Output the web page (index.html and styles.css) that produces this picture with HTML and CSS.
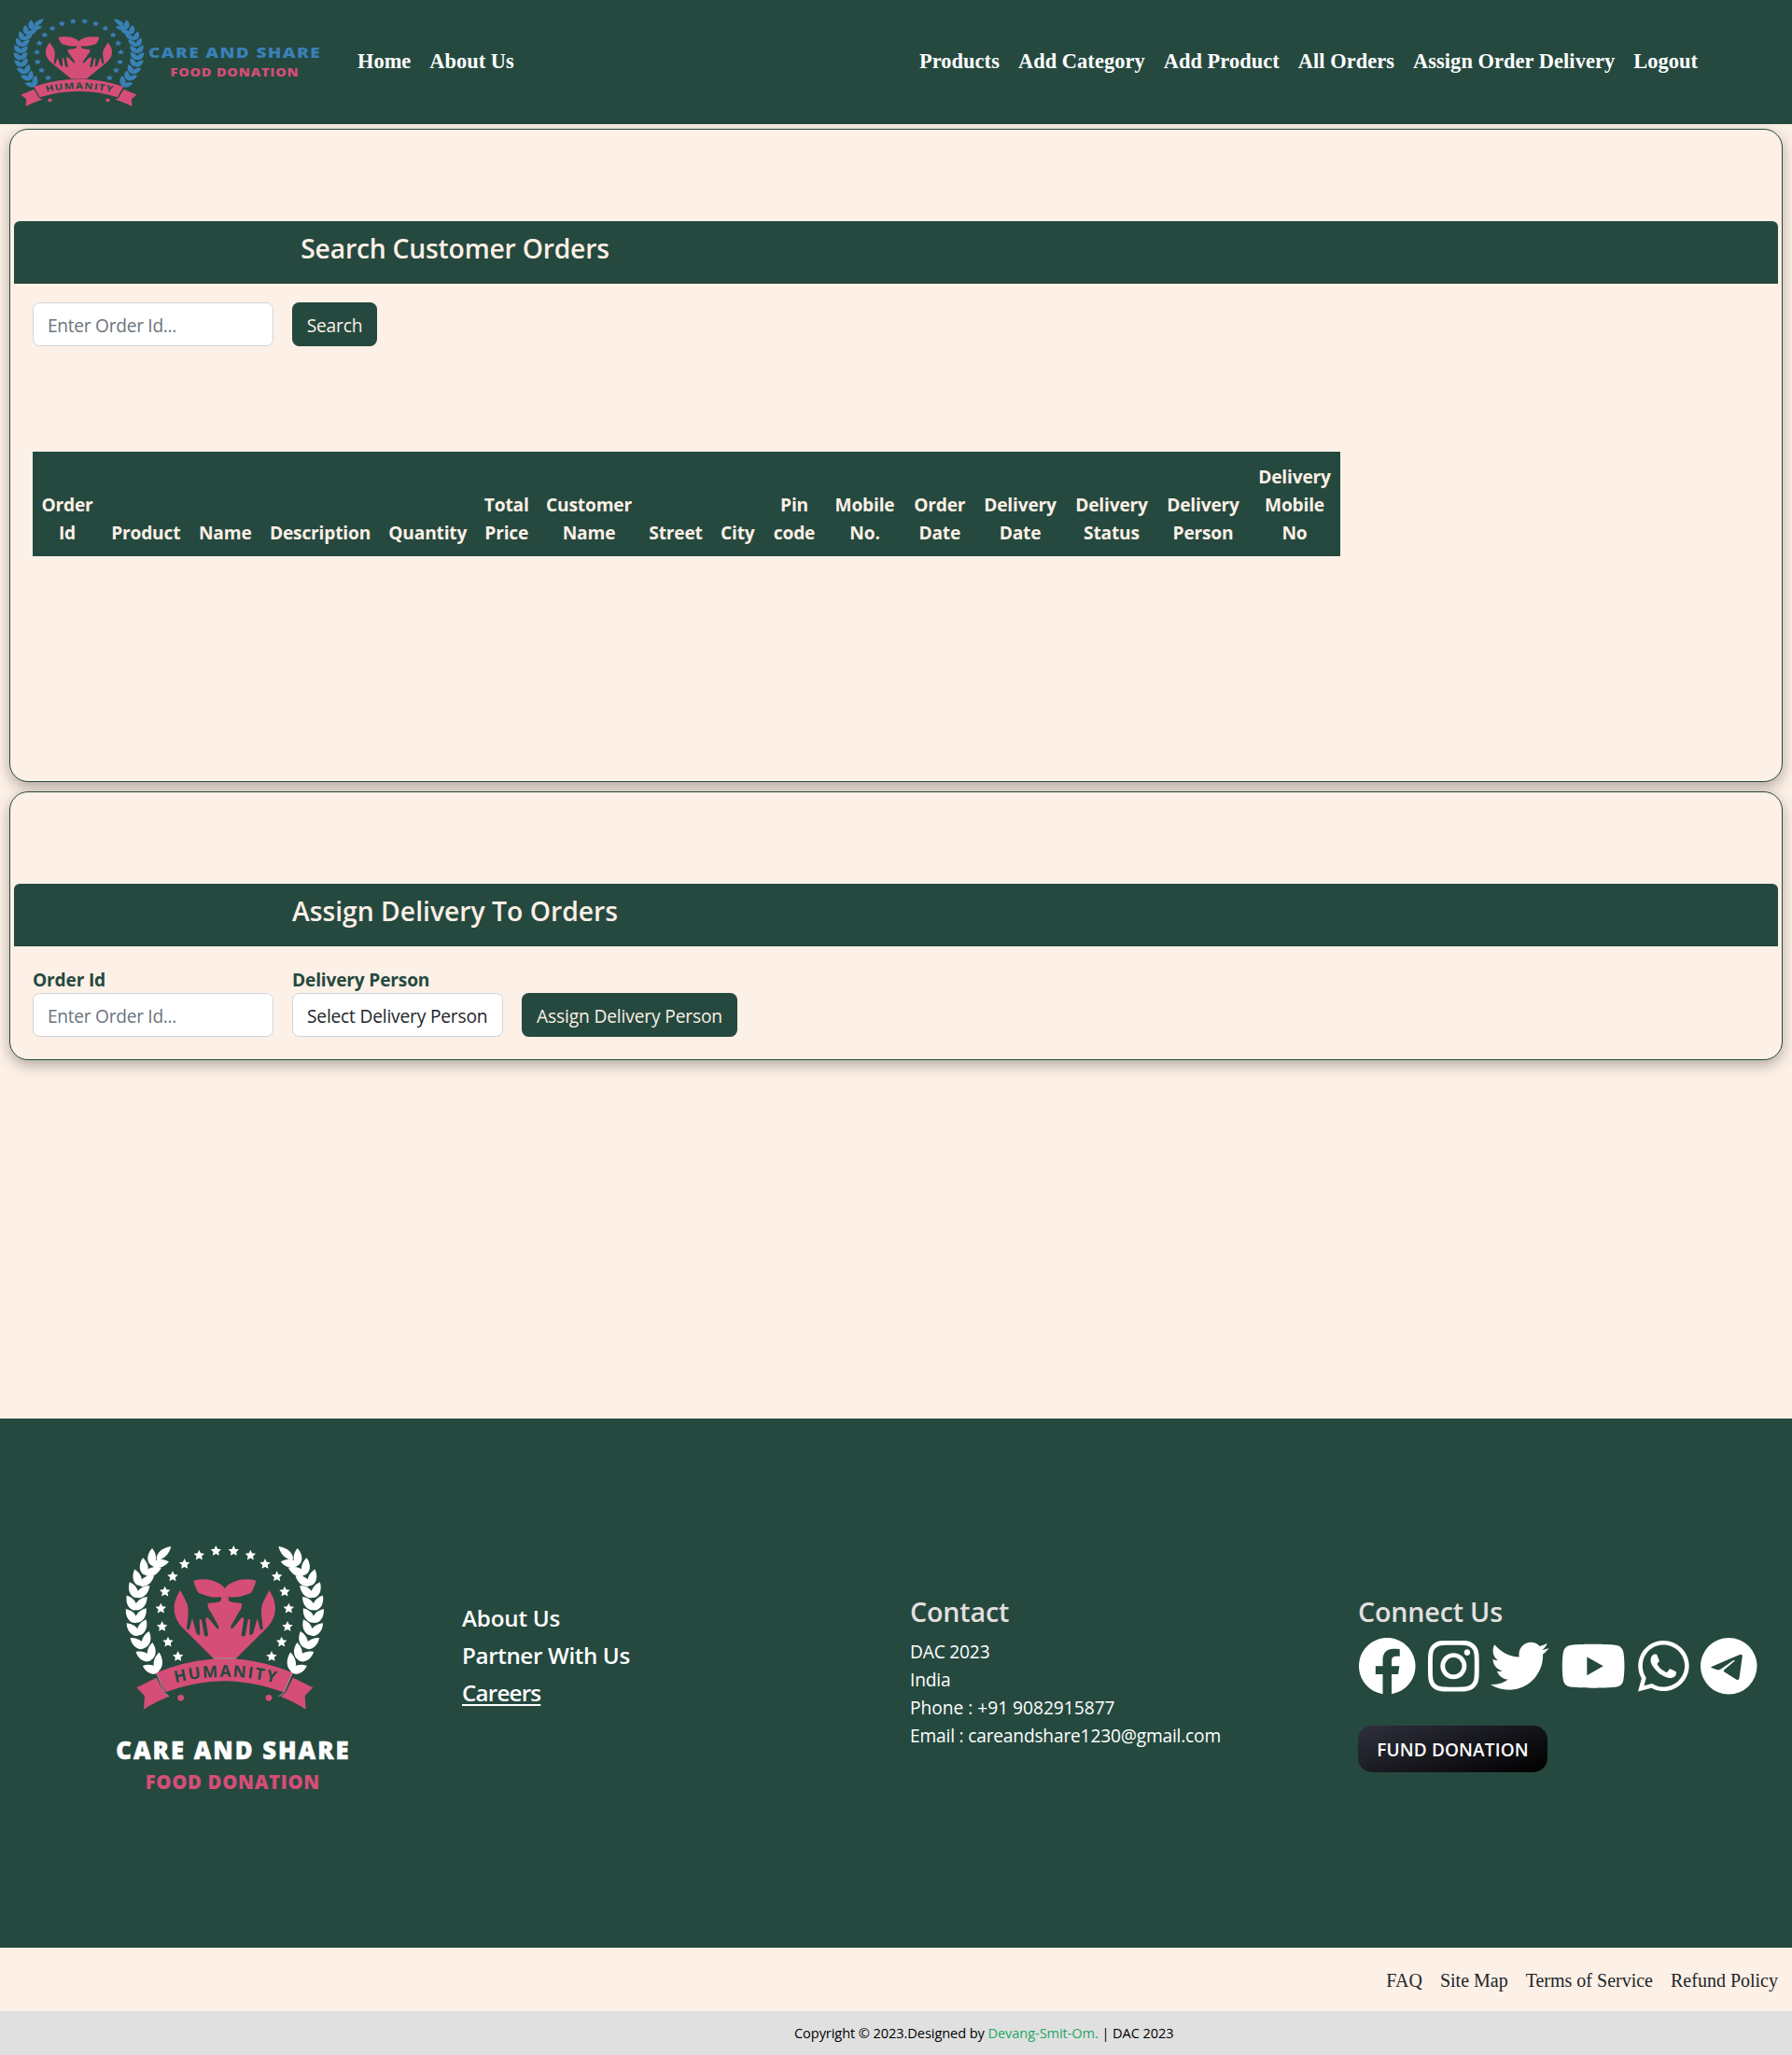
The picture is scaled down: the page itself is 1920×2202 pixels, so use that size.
FILE: index.html
```html
<!DOCTYPE html>
<html lang="en">
<head>
<meta charset="utf-8">
<title>Care and Share</title>
<link rel="stylesheet" href="styles.css">
</head>
<body>
<svg class="defs" width="0" height="0" aria-hidden="true">
  <defs>
    <path id="leaf" d="M0 0C6 -17 34 -21 56 0C36 17 10 16 0 0Z"/>
    <path id="star" d="M0-18L5.2-7L17.2-5.6L8.3 2.7L10.6 14.6L0 8.8L-10.6 14.6L-8.3 2.7L-17.2-5.6L-5.2-7Z"/>
    <g id="branch">
      <use href="#leaf" transform="translate(211 484) rotate(-160)"/>
      <use href="#leaf" transform="translate(207 484) rotate(-86) scale(1.12 1.05)"/>
      <use href="#leaf" transform="translate(186 446) rotate(-152)"/>
      <use href="#leaf" transform="translate(186 446) rotate(-86)"/>
      <use href="#leaf" transform="translate(164 408) rotate(-144)"/>
      <use href="#leaf" transform="translate(164 408) rotate(-74)"/>
      <use href="#leaf" transform="translate(147 367) rotate(-136)"/>
      <use href="#leaf" transform="translate(147 367) rotate(-66)"/>
      <use href="#leaf" transform="translate(139 326) rotate(-128)"/>
      <use href="#leaf" transform="translate(139 326) rotate(-56)"/>
      <use href="#leaf" transform="translate(137 286) rotate(-122)"/>
      <use href="#leaf" transform="translate(137 286) rotate(-50)"/>
      <use href="#leaf" transform="translate(141 246) rotate(-116)"/>
      <use href="#leaf" transform="translate(141 246) rotate(-44)"/>
      <use href="#leaf" transform="translate(150 208) rotate(-108)"/>
      <use href="#leaf" transform="translate(150 208) rotate(-36)"/>
      <use href="#leaf" transform="translate(167 173) rotate(-98)"/>
      <use href="#leaf" transform="translate(167 173) rotate(-24)"/>
      <use href="#leaf" transform="translate(189 143) rotate(-90)"/>
      <use href="#leaf" transform="translate(188 142) rotate(-12)"/>
      <use href="#leaf" transform="translate(204 124) rotate(-43) scale(1.12 .9)"/>
      <use href="#star" x="394" y="96"/>
      <use href="#star" x="340" y="110"/>
      <use href="#star" x="293" y="138"/>
      <use href="#star" x="255" y="178"/>
      <use href="#star" x="230" y="227"/>
      <use href="#star" x="217" y="281"/>
      <use href="#star" x="221" y="339"/>
      <use href="#star" x="240" y="389"/>
      <use href="#star" x="272" y="435"/>
    </g>
    <g id="half-heart">
      <path d="M280 222L298 258Q308 275 304 310L300 346Q304 354 309 345L318 312L331 360Q338 370 343 363L341 318Q344 312 348 318L357 368Q364 374 369 366L361 316Q362 306 370 312L397 344Q404 350 403 338L378 293Q366 280 368 264Q395 262 408 258Q412 252 411 241H424V440H385L290 346C252 308 252 262 280 222Z"/>
      <path d="M322 191Q352 183 384 191Q412 200 424 218V241Q404 247 375 243L340 232Q330 222 322 191Z"/>
      <path d="M139 535L203 503L228 553L243 564Q200 580 162 605L165 562Z"/>
      <circle cx="281" cy="568" r="10"/>
    </g>
    <path id="ribbon-line" d="M246 524Q422 477 600 524"/>
    <g id="emblem">
      <use href="#branch"/>
      <use href="#branch" transform="translate(845 0) scale(-1 1)"/>
      <g class="pink">
        <use href="#half-heart"/>
        <use href="#half-heart" transform="translate(845 0) scale(-1 1)"/>
        <path d="M203 487Q422 397 640 487L611 550Q422 478 232 550Z"/>
      </g>
      <text class="ribbon-text"><textPath href="#ribbon-line" startOffset="18" textLength="324">HUMANITY</textPath></text>
    </g>
  </defs>
</svg>

<nav class="navbar">
  <svg class="brand" width="345" height="133" viewBox="0 0 345 133" role="img" aria-label="Care and Share Food Donation">
    <g transform="translate(15 20) scale(.2189 .179) translate(-105 -80)"><use href="#emblem"/></g>
    <text class="logo-text" x="159" y="62.3" font-size="16" letter-spacing="1.1" textLength="185" lengthAdjust="spacingAndGlyphs">CARE AND SHARE</text>
    <text class="logo-text pink" x="182.5" y="82" font-size="12.6" letter-spacing=".7" textLength="138" lengthAdjust="spacingAndGlyphs">FOOD DONATION</text>
  </svg>
  <div class="nav-links">
    <a>Home</a><a>About Us</a>
  </div>
  <div class="nav-links nav-right">
    <a>Products</a><a>Add Category</a><a>Add Product</a><a>All Orders</a><a>Assign Order Delivery</a><a>Logout</a>
  </div>
</nav>

<main class="page">
  <section class="card card-orders">
    <header class="card-header"><h3 class="tight">Search Customer Orders</h3></header>
    <div class="form-row">
      <div class="control input">Enter Order Id...</div>
      <button class="btn btn-search">Search</button>
    </div>
    <table class="orders">
      <colgroup><col style="width:74px"><col style="width:94.5px"><col style="width:75.5px"><col style="width:128px"><col style="width:102.5px"><col style="width:66.5px"><col style="width:110px"><col style="width:76px"><col style="width:56.5px"><col style="width:65px"><col style="width:86px"><col style="width:74.5px"><col style="width:98px"><col style="width:98px"><col style="width:98px"><col style="width:98px"></colgroup>
      <thead><tr>
        <th>Order<br>Id</th><th>Product</th><th>Name</th><th>Description</th><th>Quantity</th><th>Total<br>Price</th><th>Customer<br>Name</th><th>Street</th><th>City</th><th>Pin<br>code</th><th>Mobile<br>No.</th><th>Order<br>Date</th><th>Delivery<br>Date</th><th>Delivery<br>Status</th><th>Delivery<br>Person</th><th>Delivery<br>Mobile<br>No</th>
      </tr></thead>
    </table>
  </section>

  <section class="card card-assign">
    <header class="card-header"><h3>Assign Delivery To Orders</h3></header>
    <div class="form-row form-labelled">
      <label class="field"><span class="label">Order Id</span><span class="control input">Enter Order Id...</span></label>
      <label class="field"><span class="label">Delivery Person</span><span class="control select">Select Delivery Person</span></label>
      <button class="btn btn-assign">Assign Delivery Person</button>
    </div>
  </section>
</main>

<footer class="footer">
  <div class="foot-col foot-logo">
    <svg width="250" height="270" viewBox="72 78 750 810" role="img" aria-label="Care and Share Food Donation">
      <use href="#emblem"/>
      <path class="fold" d="M203 487L228 550L243 563M640 487L612 552L596 563M385 441H460"/>
      <text class="logo-text heavy" x="73" y="764" font-size="77" textLength="748">CARE AND SHARE</text>
      <text class="logo-text pink" x="167" y="861" font-size="61" textLength="560">FOOD DONATION</text>
    </svg>
  </div>
  <div class="foot-col foot-links">
    <a>About Us</a>
    <a class="partner">Partner With Us</a>
    <a class="underlined">Careers</a>
  </div>
  <div class="foot-col foot-contact">
    <h3>Contact</h3>
    <p>DAC 2023<br>India<br><span class="phone">Phone : +91 9082915877</span><br>Email : careandshare1230@gmail.com</p>
  </div>
  <div class="foot-col foot-connect">
    <h3>Connect Us</h3>
    <div class="socials">
      <svg width="62.5" height="62.5" viewBox="0 0 512 512"><path d="M504 256C504 119 393 8 256 8S8 119 8 256c0 123.78 90.69 226.38 209.25 245V327.69h-63V256h63v-54.64c0-62.15 37-96.48 93.67-96.48 27.14 0 55.52 4.84 55.52 4.84v61h-31.28c-30.8 0-40.41 19.12-40.41 38.73V256h68.78l-11 71.69h-57.78V501C413.31 482.38 504 379.78 504 256z"/></svg>
      <svg width="54.7" height="62.5" viewBox="0 0 448 512"><path d="M224.1 141c-63.6 0-114.9 51.3-114.9 114.9s51.3 114.9 114.9 114.9S339 319.5 339 255.9 287.7 141 224.1 141zm0 189.6c-41.1 0-74.7-33.5-74.7-74.7s33.5-74.7 74.7-74.7 74.7 33.5 74.7 74.7-33.6 74.7-74.7 74.7zm146.4-194.3c0 14.9-12 26.8-26.8 26.8-14.9 0-26.8-12-26.8-26.8s12-26.8 26.8-26.8 26.8 12 26.8 26.8zm76.1 27.2c-1.7-35.9-9.9-67.7-36.2-93.9-26.2-26.2-58-34.4-93.9-36.2-37-2.1-147.9-2.1-184.9 0-35.8 1.7-67.6 9.9-93.9 36.1s-34.4 58-36.2 93.9c-2.1 37-2.1 147.9 0 184.9 1.7 35.9 9.9 67.7 36.2 93.9s58 34.4 93.9 36.2c37 2.1 147.9 2.1 184.9 0 35.9-1.7 67.7-9.9 93.9-36.2 26.2-26.2 34.4-58 36.2-93.9 2.1-37 2.1-147.8 0-184.8zM398.8 388c-7.8 19.6-22.9 34.7-42.6 42.6-29.5 11.7-99.5 9-132.1 9s-102.7 2.6-132.1-9c-19.6-7.8-34.7-22.9-42.6-42.6-11.7-29.5-9-99.5-9-132.1s-2.6-102.7 9-132.1c7.8-19.6 22.9-34.7 42.6-42.6 29.5-11.7 99.5-9 132.1-9s102.7-2.6 132.1 9c19.6 7.8 34.7 22.9 42.6 42.6 11.7 29.5 9 99.5 9 132.1s2.7 102.7-9 132.1z"/></svg>
      <svg width="62.5" height="62.5" viewBox="0 0 512 512"><path d="M459.37 151.716c.325 4.548.325 9.097.325 13.645 0 138.72-105.583 298.558-298.558 298.558-59.452 0-114.68-17.219-161.137-47.106 8.447.974 16.568 1.299 25.34 1.299 49.055 0 94.213-16.568 130.274-44.832-46.132-.975-84.792-31.188-98.112-72.772 6.498.974 12.995 1.624 19.818 1.624 9.421 0 18.843-1.3 27.614-3.573-48.081-9.747-84.143-51.98-84.143-102.985v-1.299c13.969 7.797 30.214 12.67 47.431 13.319-28.264-18.843-46.781-51.005-46.781-87.391 0-19.492 5.197-37.36 14.294-52.954 51.655 63.675 129.3 105.258 216.365 109.807-1.624-7.797-2.599-15.918-2.599-24.04 0-57.828 46.782-104.934 104.934-104.934 30.213 0 57.502 12.67 76.67 33.137 23.715-4.548 46.456-13.32 66.599-25.34-7.798 24.366-24.366 44.833-46.132 57.827 21.117-2.273 41.584-8.122 60.426-16.243-14.292 20.791-32.161 39.308-52.628 54.253z"/></svg>
      <svg width="70.3" height="62.5" viewBox="0 0 576 512"><path d="M549.655 124.083c-6.281-23.65-24.787-42.276-48.284-48.597C458.781 64 288 64 288 64S117.22 64 74.629 75.486c-23.497 6.322-42.003 24.947-48.284 48.597-11.412 42.867-11.412 132.305-11.412 132.305s0 89.438 11.412 132.305c6.281 23.65 24.787 41.5 48.284 47.821C117.22 448 288 448 288 448s170.78 0 213.371-11.486c23.497-6.321 42.003-24.171 48.284-47.821 11.412-42.867 11.412-132.305 11.412-132.305s0-89.438-11.412-132.305zm-317.51 213.508V175.185l142.739 81.205-142.739 81.201z"/></svg>
      <svg width="54.7" height="62.5" viewBox="0 0 448 512"><path d="M380.9 97.1C339 55.1 283.2 32 223.9 32c-122.4 0-222 99.6-222 222 0 39.1 10.2 77.3 29.6 111L0 480l117.7-30.9c32.4 17.7 68.9 27 106.1 27h.1c122.3 0 224.1-99.6 224.1-222 0-59.3-25.2-115-67.1-157zm-157 341.6c-33.2 0-65.7-8.9-94-25.7l-6.7-4-69.8 18.3L72 359.2l-4.4-7c-18.5-29.4-28.2-63.3-28.2-98.2 0-101.7 82.8-184.5 184.6-184.5 49.3 0 95.6 19.2 130.4 54.1 34.8 34.9 56.2 81.2 56.1 130.5 0 101.8-84.9 184.6-186.6 184.6zm101.2-138.2c-5.5-2.8-32.8-16.2-37.9-18-5.1-1.9-8.8-2.8-12.5 2.8-3.7 5.6-14.3 18-17.6 21.8-3.2 3.7-6.5 4.2-12 1.4-32.6-16.3-54-29.1-75.5-66-5.7-9.8 5.7-9.1 16.3-30.3 1.8-3.7.9-6.9-.5-9.7-1.4-2.8-12.5-30.1-17.1-41.2-4.5-10.8-9.1-9.3-12.5-9.5-3.2-.2-6.9-.2-10.6-.2-3.7 0-9.7 1.4-14.8 6.9-5.1 5.6-19.4 19-19.4 46.3 0 27.3 19.9 53.7 22.6 57.4 2.8 3.7 39.1 59.7 94.8 83.8 35.2 15.2 49 16.5 66.6 13.9 10.7-1.6 32.8-13.4 37.4-26.4 4.6-13 4.6-24.1 3.2-26.4-1.3-2.5-5-3.9-10.5-6.6z"/></svg>
      <svg width="60.5" height="62.5" viewBox="0 0 496 512"><path fill-rule="evenodd" d="M248 8a248 248 0 1 0 0 496a248 248 0 1 0 0-496ZM96 262L345 155Q370 148 367 172L340 362Q335 384 316 374L206 306Q200 298 208 288L300 210Q300 202 290 205L178 282Q160 294 140 286L100 273Q88 268 96 262Z"/></svg>
    </div>
    <button class="fund">FUND DONATION</button>
  </div>
</footer>

<div class="legal">
  <a>FAQ</a><a>Site Map</a><a>Terms of Service</a><a>Refund Policy</a>
</div>
<div class="copyright">Copyright © 2023.Designed by <a>Devang-Smit-Om.</a> | DAC 2023</div>
</body>
</html>
```
FILE: styles.css
```css
* { box-sizing: border-box; }

body {
  margin: 0;
  background: #fdf0e6;
  color: #212529;
  font: 19.2px/30px "Open Sans", "Noto Sans", sans-serif;
  letter-spacing: -.2px;
}

h3, p { margin: 0; }
button { font: inherit; letter-spacing: inherit; border: 0; margin: 0; padding: 0; }
svg { letter-spacing: 0; }
.defs { display: block; height: 0; }

.pink { fill: #d54e77; }
.ribbon-text { font: 700 52px "Open Sans", sans-serif; fill: #25493f; }
.logo-text { font-family: "Open Sans", sans-serif; font-weight: 800; }
.heavy { stroke: #fff; stroke-width: 1.5; }

/* Top navigation */
.navbar {
  display: flex;
  align-items: center;
  height: 133px;
  background: #25493f;
}
.brand { display: block; flex: none; fill: #3a80b6; }
.nav-links {
  display: flex;
  gap: 20px;
  padding-bottom: 2px;
  margin-left: 38px;
  color: #fff;
  font: bold 22.4px/34px "Liberation Serif", serif;
  letter-spacing: .03px;
}
.nav-right { margin-left: auto; margin-right: 101px; letter-spacing: .065px; }

/* Cards */
.page { padding: 5px 10px 0; height: 1387px; }
.card {
  background: #fdf0e6;
  border: 1px solid #25493f;
  border-radius: 20px;
  padding: 98px 4px 0;
  box-shadow: 0 5px 15px rgba(0, 0, 0, .3);
}
.card-orders { height: 700px; }
.card-assign { height: 288px; margin-top: 10px; }
.card-header {
  height: 67px;
  padding-top: 11px;
  background: #25493f;
  border-bottom: 1px solid #203f37;
  border-radius: 6px 6px 0 0;
  color: #fdf0e6;
}
.card-header h3 { width: 50%; text-align: center; font-size: 28.3px; line-height: 36px; font-weight: 600; letter-spacing: 0; }
.card-header .tight { letter-spacing: -.22px; }

.form-row { display: flex; gap: 20px; padding: 20px 20px 0; }
.form-labelled { align-items: flex-end; }
.field { display: block; }
.label { display: block; height: 30px; padding-top: 1px; color: #25493f; font-weight: 700; }
.control {
  display: block;
  height: 47px;
  padding: 9px 15px 0;
  line-height: 29px;
  background: #fff;
  border: 1px solid #ced4da;
  border-radius: 7.5px;
  white-space: nowrap;
}
.input { width: 258px; color: #6c757d; letter-spacing: -.3px; }
.select { width: 226px; }
.btn { height: 47px; padding-top: 2px; background: #25493f; color: #fdf0e6; border-radius: 7.5px; white-space: nowrap; }
.btn-search { width: 91px; }
.btn-assign { width: 231px; letter-spacing: -.15px; }

/* Orders table */
.orders {
  width: 1401px;
  margin: 113px 0 0 20px;
  table-layout: fixed;
  border-collapse: collapse;
  background: #25493f;
  color: #fdf0e6;
}
.orders th {
  height: 112px;
  padding: 11px 0 10px;
  vertical-align: bottom;
  text-align: center;
  font-weight: 700;
  white-space: nowrap;
}

/* Footer */
.footer {
  display: grid;
  grid-template-columns: repeat(4, 480px);
  height: 567px;
  background: #25493f;
  color: #fff;
}
.foot-col { padding-left: 15px; }
.foot-logo { padding: 136px 0 0 124px; }
.foot-logo svg { display: block; fill: #fff; }
.fold { fill: none; stroke: #f1c3cf; stroke-width: 2; }
.foot-links { display: flex; flex-direction: column; align-items: flex-start; padding-top: 193.5px; font-size: 24.2px; line-height: 40px; font-weight: 600; }
.partner { letter-spacing: -.38px; }
.underlined { letter-spacing: -.8px; text-decoration: underline; text-decoration-thickness: 2px; text-underline-offset: 3px; }
.foot-contact, .foot-connect { padding-top: 189px; }
.foot-col h3 { color: #e3dfdf; font-size: 28.7px; line-height: 36px; font-weight: 600; }
.foot-contact p { padding-top: 10px; }
.phone { letter-spacing: -.02px; }
.socials { display: flex; gap: 12.5px; margin-top: 8.7px; fill: #fff; }
.socials svg { display: block; flex: none; }
.fund {
  display: block;
  width: 203px;
  height: 50px;
  margin-top: 33px;
  padding-top: 1px;
  border-radius: 15px;
  background: linear-gradient(160deg, #2f303d, #000);
  color: #fff;
  font-size: 19px;
  font-weight: 600;
  letter-spacing: .15px;
}

.legal {
  display: flex;
  justify-content: flex-end;
  gap: 19px;
  height: 68px;
  padding: 20px 15px 0 0;
  font: 20px/30px "Liberation Serif", serif;
  letter-spacing: 0;
}
.copyright {
  height: 47px;
  padding-left: 851px;
  background: #e0e0e0;
  color: #000;
  font-size: 14.6px;
  line-height: 46px;
  letter-spacing: -.09px;
}
.copyright a { color: #1fa765; }
```
